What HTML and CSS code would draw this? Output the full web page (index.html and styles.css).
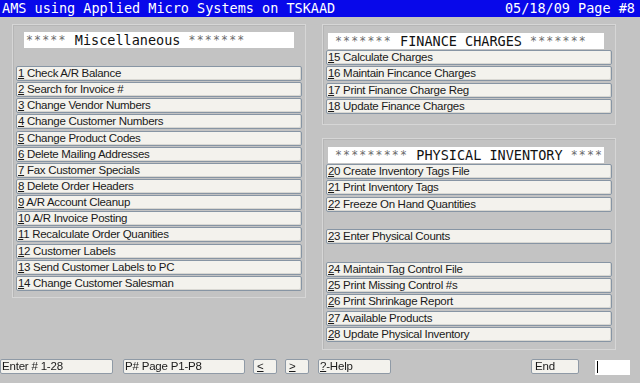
FILE: index.html
```html
<!DOCTYPE html>
<html>
<head>
<meta charset="utf-8">
<link rel="stylesheet" href="styles.css">
</head>
<body>
<div class="titlebar">
  <span>AMS using Applied Micro Systems on TSKAAD</span>
  <span>05/18/09 Page #8</span>
</div>
<div class="main">
  <div class="panel panel-misc">
    <div class="hdr"><span class="st">*****</span> Miscellaneous <span class="st">*******</span></div>
    <div class="list list-misc">
      <div class="btn"><u>1</u> Check A/R Balance</div>
      <div class="btn"><u>2</u> Search for Invoice #</div>
      <div class="btn"><u>3</u> Change Vendor Numbers</div>
      <div class="btn"><u>4</u> Change Customer Numbers</div>
      <div class="btn"><u>5</u> Change Product Codes</div>
      <div class="btn"><u>6</u> Delete Mailing Addresses</div>
      <div class="btn"><u>7</u> Fax Customer Specials</div>
      <div class="btn"><u>8</u> Delete Order Headers</div>
      <div class="btn"><u>9</u> A/R Account Cleanup</div>
      <div class="btn"><u>1</u>0 A/R Invoice Posting</div>
      <div class="btn"><u>1</u>1 Recalculate Order Quanities</div>
      <div class="btn"><u>1</u>2 Customer Labels</div>
      <div class="btn"><u>1</u>3 Send Customer Labels to PC</div>
      <div class="btn"><u>1</u>4 Change Customer Salesman</div>
    </div>
  </div>
  <div class="rightcol">
    <div class="panel panel-fin">
      <div class="hdr"><span class="st">*******</span> FINANCE CHARGES <span class="st">*******</span></div>
      <div class="list">
        <div class="btn"><u>1</u>5 Calculate Charges</div>
        <div class="btn"><u>1</u>6 Maintain Fincance Charges</div>
        <div class="btn"><u>1</u>7 Print Finance Charge Reg</div>
        <div class="btn"><u>1</u>8 Update Finance Charges</div>
      </div>
    </div>
    <div class="panel panel-inv">
      <div class="hdr"><span class="st">*********</span> PHYSICAL INVENTORY <span class="st">****</span></div>
      <div class="list">
        <div class="btn"><u>2</u>0 Create Inventory Tags File</div>
        <div class="btn"><u>2</u>1 Print Inventory Tags</div>
        <div class="btn"><u>2</u>2 Freeze On Hand Quantities</div>
        <div class="slot"></div>
        <div class="btn"><u>2</u>3 Enter Physical Counts</div>
        <div class="slot"></div>
        <div class="btn"><u>2</u>4 Maintain Tag Control File</div>
        <div class="btn"><u>2</u>5 Print Missing Control #s</div>
        <div class="btn"><u>2</u>6 Print Shrinkage Report</div>
        <div class="btn"><u>2</u>7 Available Products</div>
        <div class="btn"><u>2</u>8 Update Physical Inventory</div>
      </div>
    </div>
  </div>
</div>
<div class="bottombar">
  <div class="fbtn w-enter">Enter # 1-28</div>
  <div class="fbtn w-page">P# Page P1-P8</div>
  <div class="fbtn w-arrow"><u>&lt;</u></div>
  <div class="fbtn w-arrow"><u>&gt;</u></div>
  <div class="fbtn w-help"><u>?</u>-Help</div>
  <div class="spacer"></div>
  <div class="fbtn w-end">End</div>
  <div class="inputbox"><span class="cursor"></span></div>
</div>
</body>
</html>
```
FILE: styles.css
```css
html, body {
  margin: 0;
  padding: 0;
}
body {
  width: 640px;
  height: 383px;
  background: #c3c3c3;
  font-family: "Liberation Sans", Arial, sans-serif;
  overflow: hidden;
}
.titlebar {
  height: 17px;
  background: #0808ea;
  color: #ffffff;
  font-family: "DejaVu Sans Mono", monospace;
  font-size: 13.5px;
  line-height: 17px;
  display: flex;
  justify-content: space-between;
  padding: 0 5px 0 2px;
}
.main {
  display: flex;
  gap: 16px;
  padding: 7px 0 0 12px;
}
.panel {
  box-sizing: border-box;
  width: 294px;
  border: 1px solid #d6d6d6;
  box-shadow: inset 1px 1px 0 #b6b6b6;
  padding: 7px 3px 0 3px;
}
.panel-misc {
  height: 274px;
}
.rightcol {
  display: flex;
  flex-direction: column;
  gap: 13px;
}
.panel-fin {
  height: 101px;
  padding-top: 8px;
}
.panel-inv {
  height: 212px;
  padding-top: 8px;
}
.hdr {
  background: #ffffff;
  height: 16px;
  font-family: "DejaVu Sans Mono", monospace;
  font-size: 13.5px;
  line-height: 16px;
  color: #111;
  white-space: pre;
  overflow: hidden;
}
.st {
  color: #6a6a6a;
  font-size: 11.5px;
  letter-spacing: 1.2px;
  vertical-align: 1px;
}
.panel-misc .hdr {
  margin: 0 8px 0 8px;
  padding-left: 2px;
}
.panel-fin .hdr,
.panel-inv .hdr {
  margin: 0 8px 1px 2px;
  padding-left: 7px;
}
.list {
  display: flex;
  flex-direction: column;
  gap: 1.3px;
}
.list-misc {
  margin-top: 18px;
  gap: 1.15px;
}
.btn, .slot {
  box-sizing: border-box;
  height: 15px;
}
.btn {
  background: #f3f2ed;
  border: 1px solid #8795a4;
  border-radius: 2px;
  box-shadow: inset -1px -1px 0 #d8d7d2;
  font-size: 11.5px;
  letter-spacing: -0.3px;
  line-height: 13px;
  color: #1a1a1a;
  padding-left: 1px;
  white-space: nowrap;
  overflow: hidden;
}
.btn u, .fbtn u {
  text-decoration: underline;
  text-underline-offset: 1px;
}
.bottombar {
  position: fixed;
  left: 0;
  right: 0;
  top: 359px;
  display: flex;
  height: 15px;
}
.fbtn {
  box-sizing: border-box;
  height: 15px;
  background: #f3f2ed;
  border: 1px solid #8f9aa6;
  border-radius: 2px;
  font-size: 11.5px;
  letter-spacing: -0.2px;
  line-height: 13px;
  color: #1a1a1a;
  padding-left: 1px;
  white-space: nowrap;
}
.w-enter { width: 113px; margin-left: 0; }
.w-page { width: 122px; margin-left: 10px; }
.w-arrow { width: 24px; margin-left: 8px; padding-left: 3px; }
.w-help { width: 73px; margin-left: 9px; }
.spacer { flex: 1; }
.w-end { width: 48px; padding-left: 3px; }
.inputbox {
  box-sizing: border-box;
  width: 35px;
  height: 15px;
  margin: 1px 10px 0 16px;
  background: #ffffff;
  position: relative;
}
.cursor {
  position: absolute;
  left: 2px;
  top: 1px;
  width: 1px;
  height: 12px;
  background: #000;
}
```
